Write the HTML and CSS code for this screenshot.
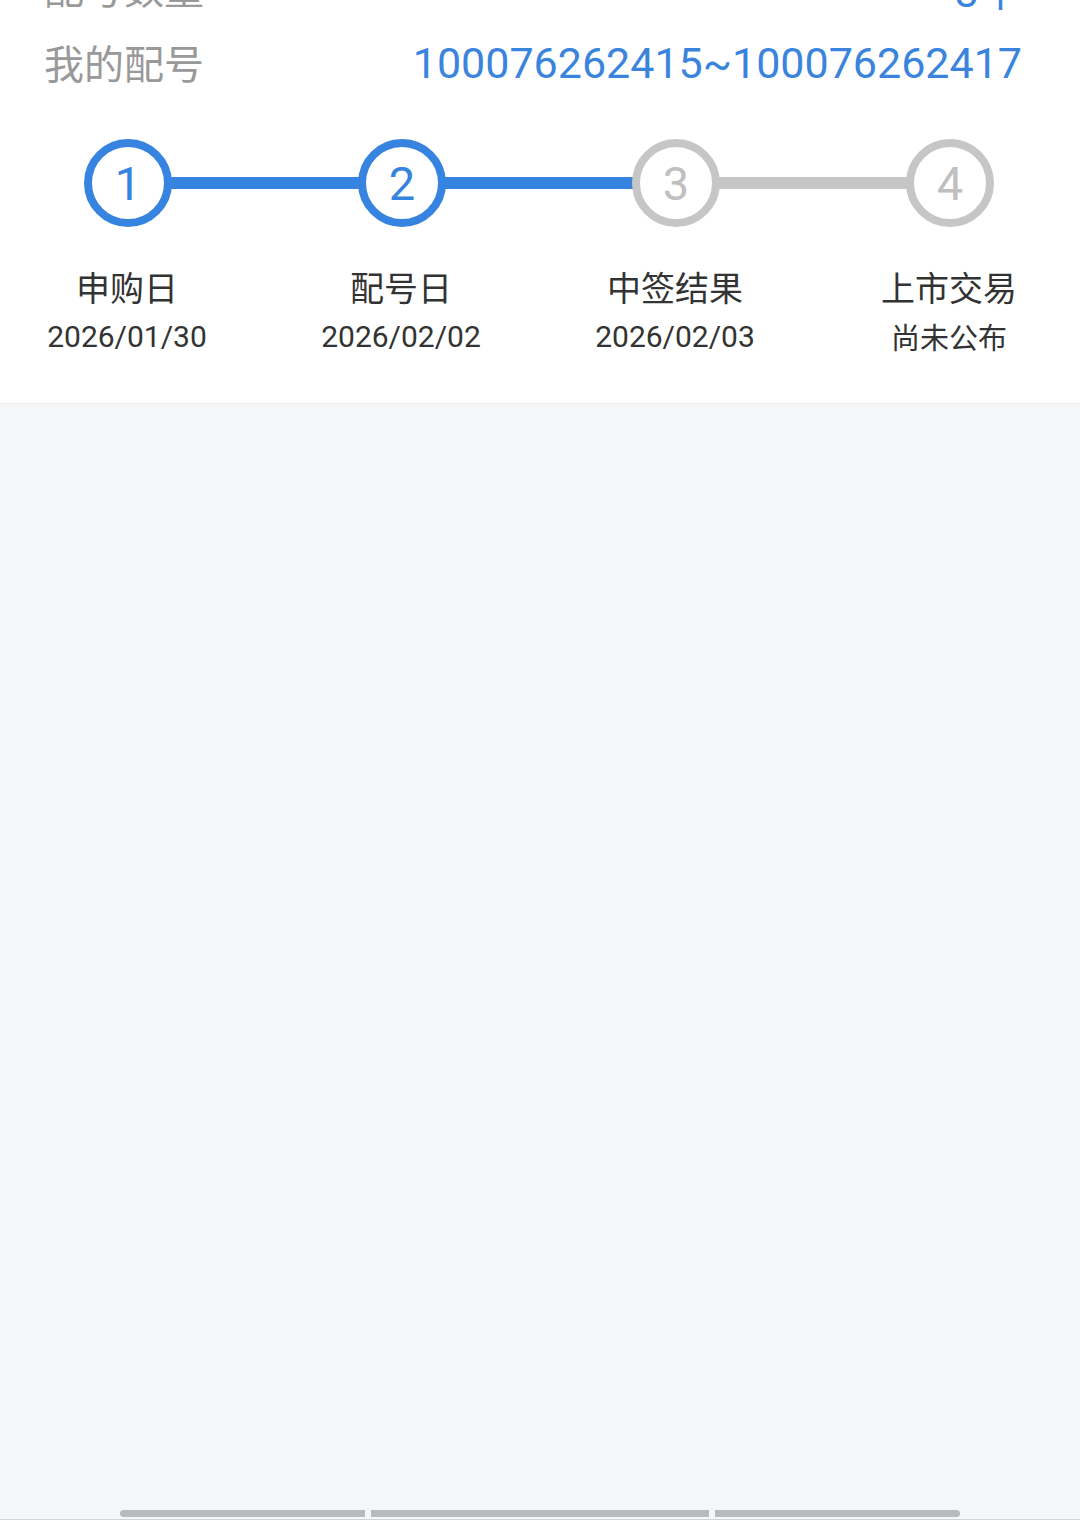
FILE: index.html
```html
<!DOCTYPE html>
<html lang="zh-CN">
<head>
  <meta charset="UTF-8">
  <meta name="viewport" content="width=device-width, initial-scale=1">
  <title>配号详情</title>
  <link rel="stylesheet" href="styles.css">
</head>
<body>
  <section class="card">
    <div class="info-list">
      <div class="info-row">
        <span class="info-label">配号数量</span>
        <span class="info-value">3个</span>
      </div>
      <div class="info-row">
        <span class="info-label">我的配号</span>
        <span class="info-value">100076262415~100076262417</span>
      </div>
    </div>

    <!-- steps -->
    <ol class="steps">
      <li class="step done">
        <div class="step-dot">1</div>
        <div class="step-title">申购日</div>
        <div class="step-date">2026/01/30</div>
      </li>
      <li class="step done">
        <div class="step-dot">2</div>
        <div class="step-title">配号日</div>
        <div class="step-date">2026/02/02</div>
      </li>
      <li class="step">
        <div class="step-dot">3</div>
        <div class="step-title">中签结果</div>
        <div class="step-date">2026/02/03</div>
      </li>
      <li class="step">
        <div class="step-dot">4</div>
        <div class="step-title">上市交易</div>
        <div class="step-date cjk">尚未公布</div>
      </li>
    </ol>
  </section>

  <div class="filler"></div>

  <div class="scrollbar">
    <span class="seg seg-left"></span>
    <span class="seg seg-mid"></span>
    <span class="seg seg-right"></span>
  </div>
</body>
</html>
```

FILE: styles.css
```css
html, body {
  margin: 0;
  padding: 0;
}

body {
  min-height: 100vh;
  display: flex;
  flex-direction: column;
  background-color: #f5f6f8;
  font-family: Roboto, "Noto Sans CJK SC", sans-serif;
  color: #333;
  overflow: hidden;
}

.card {
  background-color: #fff;
  border-bottom: 1px solid #ececec;
  padding-bottom: 46px;
}

.info-list {
  margin-top: -51px;
  padding: 0 58px 0 44px;
}

.info-row {
  height: 75px;
  display: flex;
  align-items: center;
  justify-content: space-between;
}

.info-label {
  font-family: "Noto Sans CJK SC", sans-serif;
  font-size: 40px;
  color: #999;
}

.info-value {
  font-size: 43px;
  color: #3a84dd;
  padding-top: 3px;
}

.steps {
  list-style: none;
  margin: 40px 0 0 -10px;
  padding: 0;
  display: grid;
  grid-template-columns: repeat(4, 274px);
}

.step {
  position: relative;
  display: flex;
  flex-direction: column;
  align-items: center;
}

/* connector to the previous step */
.step + .step::before {
  content: "";
  position: absolute;
  top: 38px;
  right: 50%;
  width: 100%;
  height: 12px;
  background-color: #c6c6c6;
  z-index: 0;
}

.step.done + .step::before {
  background-color: #3683e0;
}

.step-dot {
  position: relative;
  z-index: 1;
  width: 72px;
  height: 72px;
  border: 8px solid #c6c6c6;
  border-radius: 50%;
  background-color: #fff;
  color: #c0c0c0;
  font-size: 47px;
  line-height: 74px;
  text-align: center;
  margin-left: 2px;
}

.step.done .step-dot {
  border-color: #3683e0;
  color: #3683e0;
}

.step-title {
  margin-top: 38px;
  font-family: "Noto Sans CJK SC", sans-serif;
  font-size: 34px;
  line-height: 44px;
  color: #333;
}

.step-date {
  margin-top: 8px;
  font-size: 30px;
  line-height: 40px;
  color: #333;
}

.step-date.cjk {
  font-family: "Noto Sans CJK SC", sans-serif;
  font-size: 29px;
  line-height: 38px;
}

.filler {
  flex: 1;
}

.scrollbar {
  display: flex;
  justify-content: center;
  gap: 6px;
  padding-bottom: 2px;
  border-bottom: 1px solid #d4d4d6;
}

.seg {
  height: 7px;
  background-color: #b9babc;
}

.seg-left {
  width: 245px;
  border-radius: 4px 0 0 4px;
}

.seg-mid {
  width: 338px;
}

.seg-right {
  width: 245px;
  border-radius: 0 4px 4px 0;
}
```
